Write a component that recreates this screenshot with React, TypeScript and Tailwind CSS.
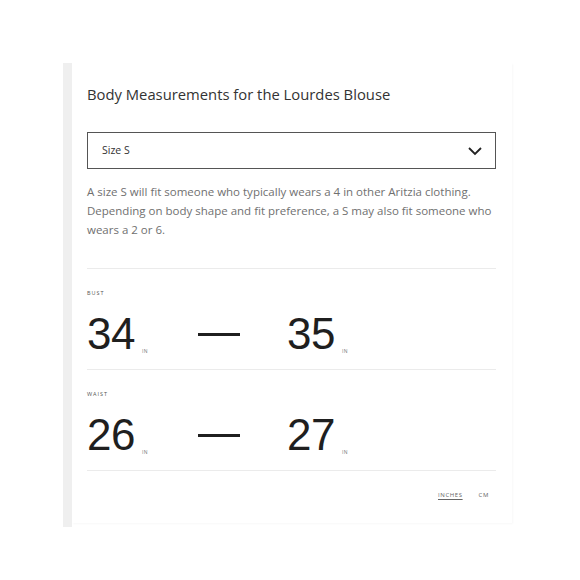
import React from "react";

const rows = [
  { label: "Bust", from: 34, to: 35 },
  { label: "Waist", from: 26, to: 27 },
];

const Value = ({ n }: { n: number }) => (
  <div className="flex items-end">
    <span className="font-['Liberation_Sans',Arial,sans-serif] text-[44px] leading-none text-[#1f1f1f] tracking-[-0.5px]">
      {n}
    </span>
    <span className="ml-[7px] mb-[1px] text-[5px] tracking-[0.5px] text-[#777]">IN</span>
  </div>
);

export default function App() {
  return (
    <div className="min-h-[580px] bg-white pt-[63px] pl-[63px] font-['Open_Sans','Noto_Sans',sans-serif]">
      <div className="flex">
        <div className="w-[9px] h-[464px] bg-[#efefef]" />
        <div className="w-[440px] h-[460px] bg-white shadow-[1px_1px_2px_rgba(0,0,0,0.03)] px-[15px] pt-[22px]">
          <h1 className="text-[14.8px] leading-[18px] text-[#333]">
            Body Measurements for the Lourdes Blouse
          </h1>

          <div className="mt-[29px] h-[37px] w-[409px] border border-[#555] flex items-center justify-between pl-[14px] pr-[12px]">
            <span className="text-[10.5px] text-[#333]">Size S</span>
            <svg width="16" height="10" viewBox="0 0 16 10" fill="none">
              <path d="M2 2l6 6 6-6" stroke="#222" strokeWidth="1.8" />
            </svg>
          </div>

          <p className="mt-[13px] w-[409px] text-[11.5px] leading-[19px] text-[#707070]">
            A size S will fit someone who typically wears a 4 in other Aritzia clothing. Depending on body shape and fit
            preference, a S may also fit someone who wears a 2 or 6.
          </p>

          <div className="mt-[29px] w-[409px] border-t border-[#ebebeb]">
            {rows.map((r) => (
              <div key={r.label} className="border-b border-[#ebebeb] pt-[21px] pb-[13px]">
                <div className="text-[5.5px] uppercase tracking-[1px] text-[#555] leading-[6px]">{r.label}</div>
                <div className="mt-[16px] flex items-center">
                  <div className="w-[111px]">
                    <Value n={r.from} />
                  </div>
                  <div className="w-[42px] h-[3px] bg-[#1f1f1f] mr-[47px]" />
                  <Value n={r.to} />
                </div>
              </div>
            ))}
          </div>

          <div className="w-[409px] flex justify-end gap-[16px] pr-[7px] mt-[20px] text-[6px] tracking-[0.6px] text-[#666]">
            <span className="underline underline-offset-2">INCHES</span>
            <span>CM</span>
          </div>
        </div>
      </div>
    </div>
  );
}
